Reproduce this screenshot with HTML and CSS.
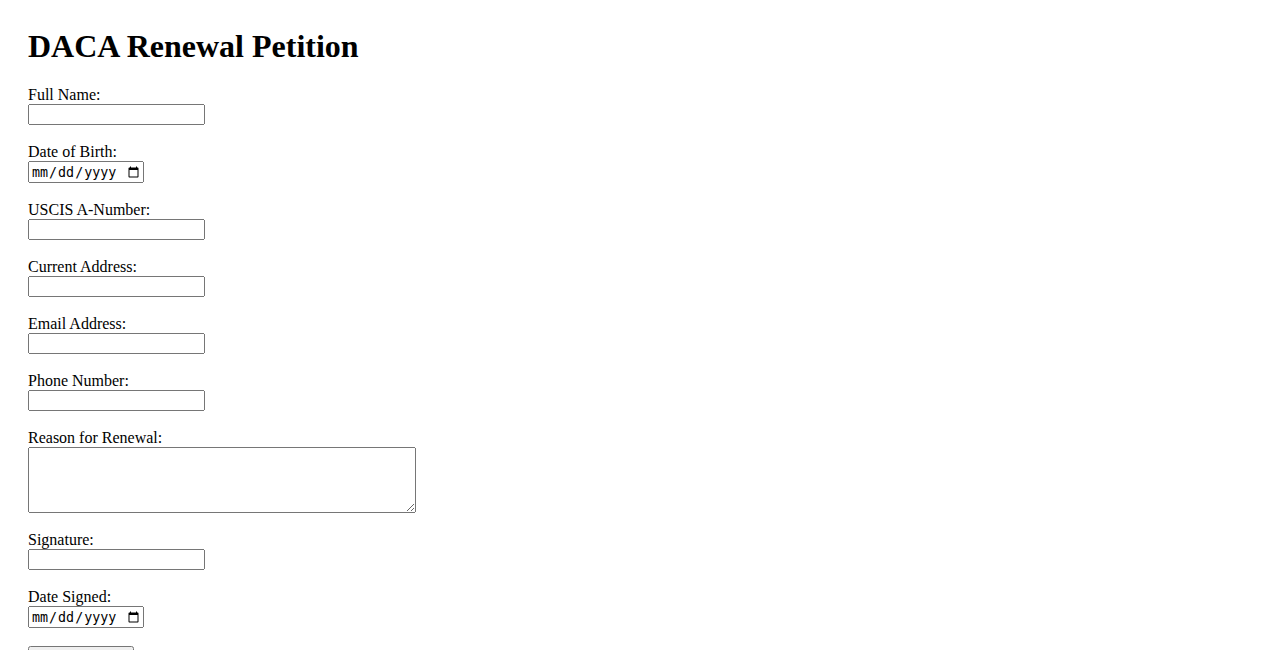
FILE: index.html
```html
<!DOCTYPE html>
<html>
<head>
<meta charset="utf-8">
<title>DACA Renewal Petition</title>
<link rel="stylesheet" href="styles.css">
</head>
<body>
<div class="page">
<h1 class="title">DACA Renewal Petition</h1>
<form class="petition">
<label for="name">Full Name:</label><br>
<input class="text-field" type="text" id="name" name="name"><br><br>
<label for="dob">Date of Birth:</label><br>
<input class="date-field" type="date" id="dob" name="dob"><br><br>
<label for="anum">USCIS A-Number:</label><br>
<input class="text-field" type="text" id="anum" name="anum"><br><br>
<label for="addr">Current Address:</label><br>
<input class="text-field" type="text" id="addr" name="addr"><br><br>
<label for="email">Email Address:</label><br>
<input class="text-field" type="email" id="email" name="email"><br><br>
<label for="phone">Phone Number:</label><br>
<input class="text-field" type="tel" id="phone" name="phone"><br><br>
<label for="reason">Reason for Renewal:</label><br>
<textarea class="area-field" id="reason" name="reason" rows="4" cols="50"></textarea><br><br>
<label for="sig">Signature:</label><br>
<input class="text-field" type="text" id="sig" name="sig"><br><br>
<label for="dsigned">Date Signed:</label><br>
<input class="date-field" type="date" id="dsigned" name="dsigned"><br><br>
<input class="submit-btn" type="submit" value="Submit Petition">
</form>
</div>
</body>
</html>
```
FILE: styles.css
```css
body {
  margin: 8px;
  font-family: "Liberation Serif", "Times New Roman", serif;
  font-size: 16px;
  color: #000;
  background: #fff;
}
.page {
  padding: 20px;
}
.title {
  margin: 0 0 21.44px 0;
  font-size: 32px;
  font-weight: bold;
}
.text-field {
  box-sizing: border-box;
  width: 177px;
  height: 21px;
}
.date-field {
  box-sizing: border-box;
  width: 116px;
  height: 22px;
}
.area-field {
  box-sizing: border-box;
  width: 388px;
  height: 66px;
  vertical-align: -4px;
}
.submit-btn {
  width: 106px;
}
```
